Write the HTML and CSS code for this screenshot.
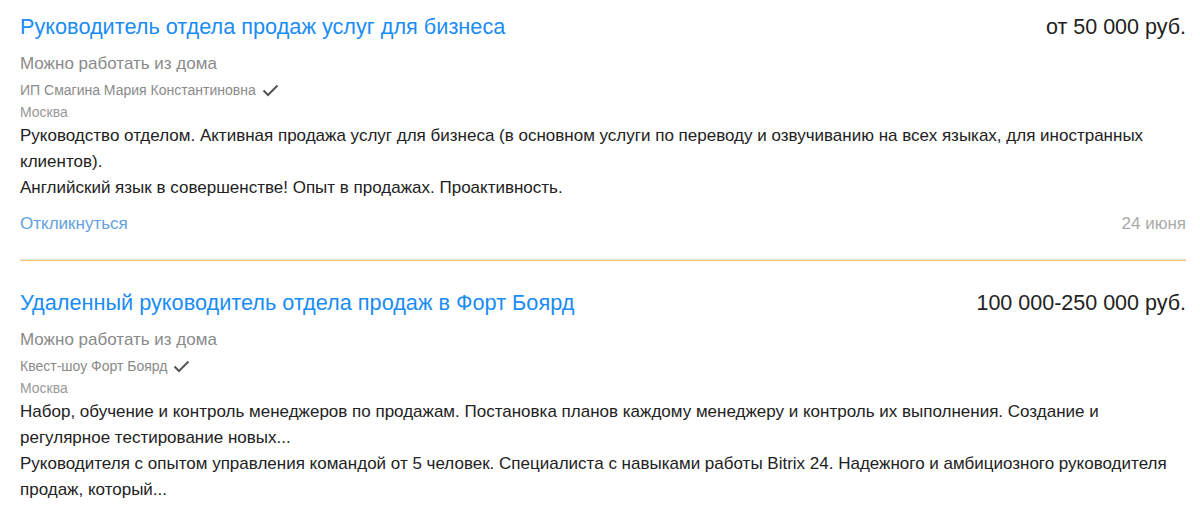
FILE: index.html
```html
<!DOCTYPE html>
<html lang="ru">
<head>
<meta charset="utf-8">
<title>Вакансии</title>
<link rel="stylesheet" href="styles.css">
</head>
<body>
<div class="list">
  <div class="item">
    <div class="head">
      <a class="title" href="#">Руководитель отдела продаж услуг для бизнеса</a>
      <div class="salary">от 50 000 руб.</div>
    </div>
    <div class="remote">Можно работать из дома</div>
    <div class="company">ИП Смагина Мария Константиновна <svg class="check" width="17" height="13" viewBox="0 0 17 13"><path d="M1.5 6.5 L6 11 L15.5 1.5" fill="none" stroke="#555" stroke-width="2"/></svg></div>
    <div class="city">Москва</div>
    <div class="desc">
      <p>Руководство отделом. Активная продажа услуг для бизнеса (в основном услуги по переводу и озвучиванию на всех языках, для иностранных клиентов).</p>
      <p>Английский язык в совершенстве! Опыт в продажах. Проактивность.</p>
    </div>
    <div class="foot">
      <a class="reply" href="#">Откликнуться</a>
      <span class="date">24 июня</span>
    </div>
  </div>
  <div class="item">
    <div class="head">
      <a class="title" href="#">Удаленный руководитель отдела продаж в Форт Боярд</a>
      <div class="salary">100 000-250 000 руб.</div>
    </div>
    <div class="remote">Можно работать из дома</div>
    <div class="company">Квест-шоу Форт Боярд <svg class="check" width="17" height="13" viewBox="0 0 17 13"><path d="M1.5 6.5 L6 11 L15.5 1.5" fill="none" stroke="#555" stroke-width="2"/></svg></div>
    <div class="city">Москва</div>
    <div class="desc">
      <p>Набор, обучение и контроль менеджеров по продажам. Постановка планов каждому менеджеру и контроль их выполнения. Создание и регулярное тестирование новых...</p>
      <p>Руководителя с опытом управления командой от 5 человек. Специалиста с навыками работы Bitrix 24. Надежного и амбициозного руководителя продаж, который...</p>
    </div>
    <div class="foot">
      <a class="reply" href="#">Откликнуться</a>
      <span class="date">24 июня</span>
    </div>
  </div>
</div>
</body>
</html>
```

FILE: styles.css
```css
html, body {
  margin: 0;
  padding: 0;
  background: #fff;
  font-family: "Liberation Sans", Arial, sans-serif;
  overflow: hidden;
}
.list {
  padding: 0 14px 0 20px;
}
.item {
  padding: 26px 0 23px;
  border-bottom: 1px solid #f5c462;
  box-shadow: 0 -1px 0 #e4e4e4 inset;
}
.item:first-child {
  padding-top: 11px;
}
.head {
  display: flex;
  justify-content: space-between;
  align-items: baseline;
}
.title {
  font-size: 21.7px;
  line-height: 32px;
  color: #1a8cf5;
  text-decoration: none;
}
.salary {
  font-size: 21.5px;
  line-height: 32px;
  color: #222;
}
.remote {
  margin-top: 8px;
  font-size: 17px;
  line-height: 26px;
  color: #8a8a8a;
}
.company {
  display: flex;
  align-items: center;
  gap: 6px;
  font-size: 14px;
  line-height: 26px;
  color: #8a8a8a;
}
.check {
  display: block;
  margin-top: 1px;
}
.city {
  font-size: 14px;
  line-height: 18px;
  color: #999;
}
.desc {
  margin-top: 2px;
  font-size: 17px;
  line-height: 26px;
  color: #222;
}
.desc p {
  margin: 0;
}
.foot {
  margin-top: 10px;
  display: flex;
  justify-content: space-between;
  align-items: baseline;
  font-size: 17px;
  line-height: 26px;
}
.reply {
  color: #63a1de;
  text-decoration: none;
}
.date {
  color: #aaa;
}
```
